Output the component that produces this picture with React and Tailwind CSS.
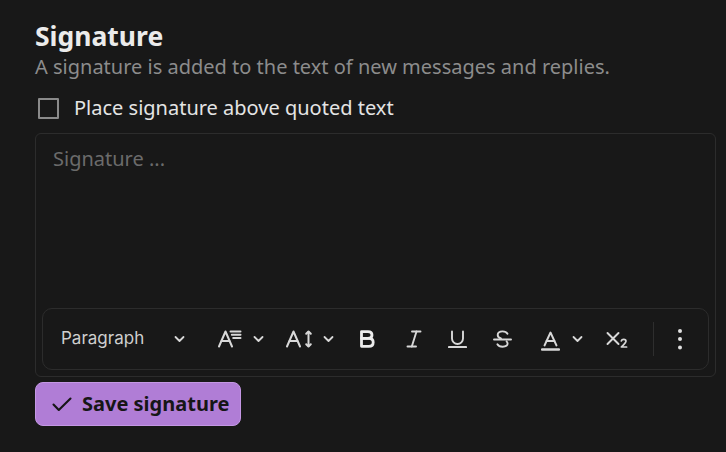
import React from "react";

const Chevron = () => (
  <svg width="11" height="8" viewBox="0 0 11 8" className="flex-none" fill="none" stroke="currentColor" strokeWidth="1.8" strokeLinecap="round" strokeLinejoin="round">
    <path d="M1.5 2 L5.5 6 L9.5 2" />
  </svg>
);

const FontSizeIcon = () => (
  <svg width="24" height="18" viewBox="0 0 24 18" className="flex-none" fill="none" stroke="currentColor" strokeWidth="2" strokeLinecap="round" strokeLinejoin="round">
    <path d="M1 16.5 L7.5 1.5 L14 16.5" />
    <path d="M3.6 11 H11.4" />
    <path d="M12.5 1.5 H22.5" />
    <path d="M13.8 4.8 H22.5" />
    <path d="M15.2 8.1 H22.5" />
  </svg>
);

const LineHeightIcon = () => (
  <svg width="27" height="18" viewBox="0 0 27 18" className="flex-none" fill="none" stroke="currentColor" strokeWidth="2" strokeLinecap="round" strokeLinejoin="round">
    <path d="M1 16.5 L7.5 1.5 L14 16.5" />
    <path d="M3.6 11 H11.4" />
    <path d="M22.5 2 V16" />
    <path d="M20.2 3.8 L22.5 1.5 L24.8 3.8" />
    <path d="M20.2 14.2 L22.5 16.5 L24.8 14.2" />
  </svg>
);

const BoldIcon = () => (
  <svg width="18" height="18" viewBox="0 0 18 18" className="flex-none" fill="none" stroke="currentColor" strokeWidth="2.8" strokeLinejoin="round">
    <path d="M3.5 1.6 H10 C12.6 1.6 14 2.9 14 4.9 C14 6.9 12.6 8.3 10 8.3 H3.5 Z" />
    <path d="M3.5 8.3 H10.8 C13.6 8.3 15.2 9.8 15.2 12.2 C15.2 14.6 13.6 16.3 10.8 16.3 H3.5 Z" />
  </svg>
);

const ItalicIcon = () => (
  <svg width="16" height="18" viewBox="0 0 16 18" className="flex-none" fill="none" stroke="currentColor" strokeWidth="1.9" strokeLinecap="round">
    <path d="M6 1.5 H14.5" />
    <path d="M1.5 16.5 H10" />
    <path d="M10.5 1.5 L5.8 16.5" />
  </svg>
);

const UnderlineIcon = () => (
  <svg width="19" height="18" viewBox="0 0 19 18" className="flex-none" fill="none" stroke="currentColor" strokeWidth="1.9" strokeLinecap="round">
    <path d="M4 1.5 V8.5 A5.5 5.5 0 0 0 15 8.5 V1.5" />
    <path d="M1 17 H18" strokeWidth="2.1" />
  </svg>
);

const StrikeIcon = () => (
  <svg width="19" height="18" viewBox="0 0 19 18" className="flex-none" fill="none" stroke="currentColor" strokeWidth="1.9" strokeLinecap="round">
    <path d="M14.5 3.8 C13.6 2.3 11.9 1.4 9.6 1.4 C6.6 1.4 4.7 2.9 4.7 5 C4.7 6.7 5.8 7.8 8 8.4" />
    <path d="M1 9.5 H18" />
    <path d="M13.6 11.3 C14.2 11.9 14.6 12.7 14.6 13.6 C14.6 15.6 12.7 16.7 9.6 16.7 C7.2 16.7 5.3 15.9 4.4 14.3" />
  </svg>
);

const ColorIcon = () => (
  <svg width="19" height="20" viewBox="0 0 19 20" className="flex-none" fill="none" stroke="currentColor" strokeWidth="1.9" strokeLinecap="round" strokeLinejoin="round">
    <path d="M3.5 14.5 L9.5 1.5 L15.5 14.5" />
    <path d="M5.6 10 H13.4" />
    <path d="M1 18.5 H18" strokeWidth="2.3" />
  </svg>
);

const SubscriptIcon = () => (
  <svg width="23" height="18" viewBox="0 0 23 18" className="flex-none" fill="none" stroke="currentColor" strokeWidth="1.9" strokeLinecap="round" strokeLinejoin="round">
    <path d="M1.5 3 L12.5 14" />
    <path d="M12.5 3 L1.5 14" />
    <path d="M15.3 11 C15.6 9.9 16.5 9.3 17.7 9.3 C19 9.3 20 10.1 20 11.3 C20 12.8 18 14.1 15.3 17 H20.6" strokeWidth="1.7" />
  </svg>
);

const Dots = () => (
  <svg width="6" height="22" viewBox="0 0 6 22" className="flex-none" fill="currentColor">
    <circle cx="3" cy="3" r="2" />
    <circle cx="3" cy="11" r="2" />
    <circle cx="3" cy="19.5" r="2" />
  </svg>
);

const Check = () => (
  <svg width="20" height="15" viewBox="0 0 20 15" className="flex-none" fill="none" stroke="currentColor" strokeWidth="2.1" strokeLinecap="round" strokeLinejoin="round">
    <path d="M1.5 7.5 L6.8 13 L18.5 1.5" />
  </svg>
);

export default function App() {
  return (
    <div
      className="w-[726px] h-[452px] bg-[#181818] overflow-hidden pl-[35px] pr-[10px] pt-[20px]"
      style={{ fontFamily: '"Noto Sans", sans-serif' }}
    >
      <h1 className="text-[26.5px] leading-[32px] font-bold text-[#ebebeb]">Signature</h1>
      <p className="text-[20px] leading-[28px] text-[#8c8c8c] mt-[1px]">
        A signature is added to the text of new messages and replies.
      </p>
      <label className="flex items-center mt-[12px] h-[30px]">
        <span className="flex-none w-[21px] h-[21px] border-2 border-[#8a8a8a] ml-[3px] mr-[15px] rounded-[1px]" />
        <span className="text-[20px] text-[#e4e4e4]">Place signature above quoted text</span>
      </label>
      <div className="mt-[10px] h-[244px] border border-[#2c2c2c] rounded-[6px] flex flex-col p-[6px]">
        <div className="flex-1 pl-[11px] pt-[5px] text-[20px] leading-[28px] text-[#6b6b6b]">Signature ...</div>
        <div className="h-[62px] border border-[#2c2c2c] rounded-[10px] flex items-center text-[#d8d8d8]">
          <span
            className="flex-none ml-[18px] w-[113px] text-[17px] text-[#cfcfcf]"
            style={{ fontFamily: "Inter, sans-serif" }}
          >
            Paragraph
          </span>
          <Chevron />
          <span className="ml-[33px] flex"><FontSizeIcon /></span>
          <span className="ml-[11px] flex"><Chevron /></span>
          <span className="ml-[22px] flex"><LineHeightIcon /></span>
          <span className="ml-[10px] flex"><Chevron /></span>
          <span className="ml-[24px] flex text-[#ececec]"><BoldIcon /></span>
          <span className="ml-[30px] flex"><ItalicIcon /></span>
          <span className="ml-[26px] flex"><UnderlineIcon /></span>
          <span className="ml-[26px] flex"><StrikeIcon /></span>
          <span className="ml-[29px] flex mt-[3px]"><ColorIcon /></span>
          <span className="ml-[12px] flex"><Chevron /></span>
          <span className="ml-[23px] flex"><SubscriptIcon /></span>
          <span className="flex-none ml-[24px] w-px h-[34px] bg-[#2e2e2e]" />
          <span className="ml-[23px] flex text-[#e0e0e0]"><Dots /></span>
        </div>
      </div>
      <button className="mt-[5px] h-[44px] w-[206px] bg-[#b07dd6] rounded-[8px] flex items-center pl-[16px] text-[#161616] border border-[#c497e4]">
        <Check />
        <span className="ml-[10px] text-[20px] font-bold">Save signature</span>
      </button>
    </div>
  );
}
